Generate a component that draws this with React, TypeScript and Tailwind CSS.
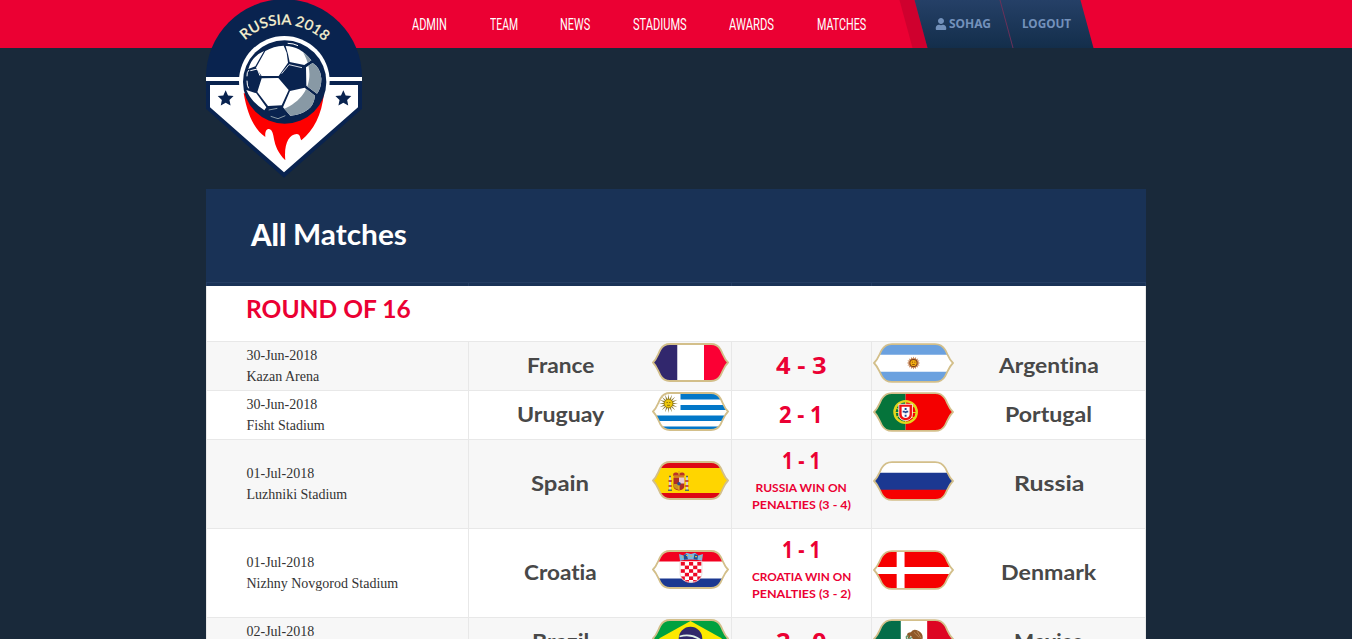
import { useLayoutEffect, useRef, useState, type ReactNode } from 'react';
import { FaUser } from 'react-icons/fa';

/* Text squeezed or stretched horizontally so that it fills its box exactly. */
function Fit({ width, className = '', children }: { width: number; className?: string; children: ReactNode }) {
  const ref = useRef<HTMLSpanElement>(null);
  const [scale, setScale] = useState(1);
  useLayoutEffect(() => {
    if (ref.current) setScale(width / ref.current.offsetWidth);
  }, [width]);
  return (
    <span className={`block whitespace-nowrap ${className}`} style={{ width }}>
      <span ref={ref} className="inline-block origin-left" style={{ transform: `scaleX(${scale})` }}>
        {children}
      </span>
    </span>
  );
}

const star = (cx: number, cy: number, R: number, r = R * 0.48, n = 5) =>
  Array.from({ length: n * 2 }, (_, i) => {
    const a = (Math.PI * i) / n - Math.PI / 2;
    const q = i % 2 ? r : R;
    return `${(cx + q * Math.cos(a)).toFixed(2)},${(cy + q * Math.sin(a)).toFixed(2)}`;
  }).join(' ');

const panels =
  'M208 153 Q232 138 263 137 L272 158 L276 188 L248 228 L197 228 L180 203 Z ' +
  'M157 207 Q168 168 204 153 L178 199 Z ' +
  'M269 138 Q312 138 346 181 L325 195 L281 186 L276 163 Z ' +
  'M197 235 L247 234 L278 270 L257 316 L216 318 L184 276 Z ' +
  'M151 270 L181 280 L211 322 L205 331 Q166 306 151 270 Z ' +
  'M282 273 L326 263 L357 287 Q354 314 337 328 Q315 345 283 347 L261 322 Z ' +
  'M330 202 L350 189 Q374 204 376 235 Q377 262 363 281 L331 257 Z';

function Logo() {
  return (
    <svg className="block h-[185px] w-[156px]" viewBox="30 0 468 555">
      <defs>
        <path id="arc" d="M147 121 A168 168 0 0 1 402 146" />
        <clipPath id="panels"><path d={panels} /></clipPath>
      </defs>
      <path d="M30 232 A234 234 0 0 1 498 232 V326 L264 533 L30 326 Z" fill="#09234f" />
      <path d="M30 231 H498 V243 H30 Z M42 255 H486 V322 L264 517 L42 322 Z" fill="#fff" />
      <circle cx="265" cy="244" r="136" fill="#fff" />
      <path d="M143 280 C154 345 176 389 208 411 C207 398 209 387 219 387 C242 394 221 434 268 481 C263 432 279 403 302 402 C314 403 311 413 316 421 C353 392 377 345 384 280 Z" fill="#fe0000" />
      <circle cx="266" cy="246" r="125" fill="#09234f" />
      <path d={panels} fill="#fff" />
      <path clipPath="url(#panels)" d="M302 130 C361 198 355 289 262 328 L280 360 L340 350 L400 300 L390 130 Z" fill="#8899a5" />
      <g fill="none" stroke="#fff" strokeWidth="3">
        <path d="M153 229 Q152 216 159 210 M163 212 L184 207 L192 227 M153 242 Q153 258 158 265" />
        <path d="M275 130 Q292 130 306 137" />
        <path d="M257 221 L279 194 L318 203" strokeWidth="2.5" />
        <path d="M224 349 L246 356 L268 347 M218 330 L244 325" stroke="#8899a5" />
      </g>
      <polygon points={star(89, 296, 25)} fill="#09234f" />
      <polygon points={star(442, 296, 25)} fill="#09234f" />
      <text fill="#f8f2cf" stroke="#f8f2cf" strokeWidth=".6" fontSize="43" fontFamily="Lato, sans-serif" fontWeight="500">
        <textPath href="#arc" textLength="264" lengthAdjust="spacingAndGlyphs">RUSSIA 2018</textPath>
      </text>
    </svg>
  );
}

const outline =
  'M1 19.5 C5 15.5 6 11 8.5 6.5 C10.5 3 13 1 18 1 H59 C64 1 66.5 3 68.5 6.5 C71 11 72 15.5 76 19.5 C72 23.5 71 28 68.5 32.5 C66.5 36 64 38 59 38 H18 C13 38 10.5 36 8.5 32.5 C6 28 5 23.5 1 19.5 Z';

const art: Record<string, ReactNode> = {
  France: (<><path d="M0 0h25.5v39H0z" fill="#31276d" /><path d="M25.5 0H52v39H25.5z" fill="#fff" /><path d="M52 0h25v39H52z" fill="#fb0034" /></>),
  Argentina: (
    <>
      <path d="M0 0h77v39H0z" fill="#6ba1df" /><path d="M0 11.5h77V28H0z" fill="#fff" />
      <polygon points={star(38.5, 19.5, 6.3, 4.4, 16)} fill="#c98a5c" />
      <circle cx="38.5" cy="19.5" r="3.8" fill="#7d3c12" /><circle cx="38.5" cy="19.5" r="3" fill="#f3ae12" />
      <path d="M37 18.7h1M39.3 18.7h1M37.2 21h2.6" stroke="#6b3410" strokeWidth=".7" />
    </>
  ),
  Uruguay: (
    <>
      <path d="M0 0h77v39H0z" fill="#fff" />
      <path d="M28.5 2H77v5.5H28.5zM28.5 13H77v5H28.5zM0 23.5h77V29H0zM0 34.5h77V39H0z" fill="#0277c8" />
      <polygon points={star(16.5, 11.5, 9.5, 4, 16)} fill="#94813a" />
      <circle cx="16.5" cy="11.5" r="4.3" fill="#eec80a" stroke="#8c7411" strokeWidth=".7" />
      <path d="M14.5 10.5h1.4M17.1 10.5h1.4M15 13.3h3" stroke="#75600a" strokeWidth=".8" />
    </>
  ),
  Portugal: (
    <>
      <path d="M0 0h31v39H0z" fill="#05743b" /><path d="M31 0h46v39H31z" fill="#f40000" />
      <circle cx="31" cy="19.5" r="10.6" fill="none" stroke="#e3d61c" strokeWidth="2.3" />
      <path d="M21 15 L40 26 M40 13 L22 25 M31 9 V30 M20 20 H42" stroke="#e3d61c" strokeWidth="1.1" />
      <path d="M24.5 12h13v9.5c0 8.5-13 8.5-13 0z" fill="#ef1111" stroke="#fff" strokeWidth=".8" />
      <path d="M27.2 14.5h7.6v7c0 5.2-7.6 5.2-7.6 0z" fill="#fff" />
      <path d="M31 15.5v9M28.2 19.2h5.6" stroke="#24438f" strokeWidth="1.8" strokeDasharray="2 1.3" />
    </>
  ),
  Spain: (
    <>
      <path d="M0 0h77v39H0z" fill="#ffd500" /><path d="M0 0h77v7H0zM0 32h77v7H0z" fill="#dd0714" />
      <path d="M18 16v13M35 16v13" stroke="#d8d4c5" strokeWidth="2" />
      <path d="M16.5 20h3.3M33.2 20h3.3M16.5 25h3.3M33.2 25h3.3" stroke="#b5232b" strokeWidth="1.5" />
      <path d="M16 29.3h4M33 29.3h4M17 15.5h2M34 15.5h2" stroke="#5c6a57" strokeWidth="1.4" />
      <path d="M21.5 16.5h10.8v8.8c0 5.5-10.8 5.5-10.8 0z" fill="#ac2d28" />
      <path d="M27 16.5h5.3v6H27z" fill="#e7ccd2" /><path d="M21.5 23h5.4v5.6c-4-.4-5.4-2-5.4-5.6z" fill="#cc951f" />
      <path d="M27 23v6" stroke="#f0c220" /><circle cx="27" cy="22.8" r="1.8" fill="#284c96" />
      <path d="M22 15.7c-3-4.5 3-5.3 4.8-3 2.5-2.3 8-1.1 5 3z" fill="#bb3327" />
      <path d="M22 15h10M27 10v4" stroke="#dba625" strokeWidth="1.2" />
    </>
  ),
  Russia: (<><path d="M0 0h77v12H0z" fill="#fff" /><path d="M0 11.5h77v17H0z" fill="#1b3891" /><path d="M0 28h77v11H0z" fill="#f60000" /></>),
  Croatia: (
    <>
      <path d="M0 0h77v12H0z" fill="#f20020" /><path d="M0 11.5h77V28.5H0z" fill="#fff" /><path d="M0 28.5h77V39H0z" fill="#1b3891" />
      <clipPath id="cro"><path d="M28 11.5h22V23c0 13-22 13-22 0z" /></clipPath>
      <g clipPath="url(#cro)">
        <path d="M28 11h22v24H28z" fill="#fff" />
        {Array.from({ length: 30 }, (_, i) => {
          const c = i % 5, r = Math.floor(i / 5);
          return (c + r) % 2 === 0 ? <rect key={i} x={28.7 + c * 4.15} y={12 + r * 3.6} width="4.15" height="3.6" fill="#ee0825" /> : null;
        })}
      </g>
      <path d="M28 11.5V23c0 12 22 12 22 0V11.5" fill="none" stroke="#e4d5d7" strokeWidth=".8" />
      <path d="M28 10.8 L27 4 L31.5 5.5 L34.5 2.8 L39 4 L43 2.8 L46.5 5.5 L51 4 L50 10.8 Q39 8 28 10.8Z" fill="#7bb7df" />
      <path d="M32 9.8 L31.5 5 L34.5 4 L36 9.3ZM41.5 9.3 L42.5 4 L46 5 L45.5 9.8Z" fill="#204d92" />
      <path d="M30 7h1.5M34 5.5h2M38 6h2.3M43 6.7h2M48 7h1.5" stroke="#dcb84a" strokeWidth="1.2" />
    </>
  ),
  Denmark: (<><path d="M0 0h77v39H0z" fill="#f60000" /><path d="M22.5 0h7.5v39h-7.5zM0 16.5h77v7H0z" fill="#fff" /></>),
  Brazil: (
    <>
      <path d="M0 0h77v39H0z" fill="#00a13f" /><path d="M38.5 2 L70 19.5 L38.5 37 L7 19.5Z" fill="#fce900" />
      <circle cx="38.5" cy="19.5" r="11.8" fill="#30286b" />
      <path d="M27.5 17.5 Q40 14 50 22" fill="none" stroke="#dff0e8" strokeWidth="1.7" />
    </>
  ),
  Mexico: (
    <>
      <path d="M0 0h26.5v39H0z" fill="#046d49" /><path d="M26.5 0H51.5v39H26.5z" fill="#fff" /><path d="M51.5 0H77v39H51.5z" fill="#dd0522" />
      <path d="M34 20 Q30 13 36 13 Q38 9 43 11.5 Q49 15 46.5 21 Q42 25 38 20 L36 16Z" fill="#8f5928" />
      <path d="M34 17 Q30 15 33 22 M37 18 L33 20 M41 22 L45 27" fill="none" stroke="#68976f" strokeWidth="1.4" />
      <path d="M39 13 L44 18 M42 12 L46 19" stroke="#c09160" strokeWidth=".8" />
    </>
  ),
};

function Flag({ team, className }: { team: string; className: string }) {
  return (
    <svg viewBox="0 0 77 39" preserveAspectRatio="none" className={`block shrink-0 ${className}`}>
      <clipPath id={`flag-${team}`}><path d={outline} /></clipPath>
      <g clipPath={`url(#flag-${team})`}>{art[team]}</g>
      <path d={outline} fill="none" stroke="#d3bf8a" strokeWidth="1.8" vectorEffect="non-scaling-stroke" />
    </svg>
  );
}

const nav: [string, number][] = [['ADMIN', 35], ['TEAM', 28], ['NEWS', 30], ['STADIUMS', 54], ['AWARDS', 45], ['MATCHES', 49]];

type Match = {
  date: string; venue: string;
  home: [string, number]; away: [string, number];
  score: [string, number]; note?: [string, number][];
};

const matches: Match[] = [
  { date: '30-Jun-2018', venue: 'Kazan Arena', home: ['France', 67], away: ['Argentina', 100], score: ['4 - 3', 51] },
  { date: '30-Jun-2018', venue: 'Fisht Stadium', home: ['Uruguay', 87], away: ['Portugal', 87], score: ['2 - 1', 44] },
  { date: '01-Jul-2018', venue: 'Luzhniki Stadium', home: ['Spain', 58], away: ['Russia', 70], score: ['1 - 1', 39], note: [['RUSSIA WIN ON', 91], ['PENALTIES (3 - 4)', 99]] },
  { date: '01-Jul-2018', venue: 'Nizhny Novgorod Stadium', home: ['Croatia', 73], away: ['Denmark', 95], score: ['1 - 1', 39], note: [['CROATIA WIN ON', 99], ['PENALTIES (3 - 2)', 99]] },
  { date: '02-Jul-2018', venue: 'Samara Arena', home: ['Brazil', 57], away: ['Mexico', 70], score: ['2 - 0', 51] },
];

function Row({ m, shaded }: { m: Match; shaded: boolean }) {
  const name = "font-['Lato',sans-serif] text-[21px] font-bold leading-[30px] text-[#484848] [font-variant-ligatures:none]";
  return (
    <div className={`flex shrink-0 divide-x divide-[#e8e8e8] border-t border-[#e8e8e8] ${m.note ? 'h-[89px]' : 'h-[49px]'} ${shaded ? 'bg-[#f7f7f7]' : 'bg-white'}`}>
      <div className="flex w-[262px] flex-col justify-center pl-[39.5px] font-['Liberation_Serif',serif] text-[14px] leading-[21px] text-[#333]">
        <p>{m.date}</p>
        <p>{m.venue}</p>
      </div>
      <div className="flex w-[263px] items-center">
        <div className="flex flex-1 justify-center pr-[1px] pb-[2px]"><Fit width={m.home[1]} className={name}>{m.home[0]}</Fit></div>
        <Flag team={m.home[0]} className="mr-[2px] mb-[7px] h-[39px] w-[77px]" />
      </div>
      <div className="flex w-[140px] flex-col items-center justify-center pr-[1px] pb-[2px] font-['Lato',sans-serif] font-bold text-[#eb0033]">
        <Fit width={m.score[1]} className="font-['Open_Sans',sans-serif] text-[23px] leading-[30px]">{m.score[0]}</Fit>
        {m.note && (
          <div className="flex flex-col items-center pt-1 pb-2 text-[12px] leading-[17px]">
            {m.note.map(([text, width]) => <Fit key={text} width={width}>{text}</Fit>)}
          </div>
        )}
      </div>
      <div className="flex w-[273px] items-center">
        <Flag team={m.away[0]} className="ml-[1px] mb-[6px] h-[40px] w-[81px]" />
        <div className="flex flex-1 justify-center pr-[2px] pb-[2px]"><Fit width={m.away[1]} className={name}>{m.away[0]}</Fit></div>
      </div>
    </div>
  );
}

export default function App() {
  return (
    <div className="h-[639px] overflow-hidden bg-[#19293a]">
      <header className="h-12 bg-[#eb0033]">
        <div className="flex h-12 pl-[206px]">
          <div className="relative h-12 w-[156px] shrink-0">
            <div className="absolute top-0 left-0"><Logo /></div>
          </div>
          <nav className="ml-[50px] flex items-center gap-[42.6px] pt-[2px] font-['Roboto',sans-serif] text-[16px] leading-6 text-white">
            {nav.map(([label, width]) => (
              <a key={label} href="#"><Fit width={width}>{label}</Fit></a>
            ))}
          </nav>
          <div className="ml-10 flex h-[48px] skew-x-[15.2deg] font-['Noto_Sans',sans-serif] text-[12px] font-bold leading-none text-[#7391bb]">
            <div className="w-[15px] bg-[#cf002e]" />
            <div className="flex w-[166px] bg-linear-to-b from-[#254067] to-[#132e4b]">
              <a href="#" className="flex w-[86px] items-center justify-center border-r border-[#6b3159] pr-[2px]">
                <span className="flex -skew-x-[15.2deg] items-center gap-[2px]"><FaUser size={12} /><Fit width={42}>SOHAG</Fit></span>
              </a>
              <a href="#" className="flex flex-1 items-center justify-center pr-[2px]">
                <span className="-skew-x-[15.2deg]"><Fit width={49}>LOGOUT</Fit></span>
              </a>
            </div>
          </div>
        </div>
      </header>
      <main className="mx-auto mt-[141px] flex w-[940px] flex-col">
        <div className="flex h-[93px] shrink-0 items-center gap-[6px] bg-[#193256] pb-[3px] pl-[45px] font-['Lato',sans-serif] text-white">
          <Fit width={36} className="text-[31px] font-black leading-9">All</Fit>
          <Fit width={114} className="text-[28px] font-bold leading-9">Matches</Fit>
        </div>
        <div className="flex h-1 shrink-0 divide-x divide-[#243d62] border-x border-t border-[#243d62] bg-[#193256]">
          <div className="w-[262px]" /><div className="w-[263px]" /><div className="w-[140px]" /><div className="w-[273px]" />
        </div>
        <div className="border-x border-[#e8e8e8] bg-white">
          <div className="h-[55px] pt-[6px] pl-[39px]">
            <Fit width={165} className="font-['Lato',sans-serif] text-[25px] font-bold leading-[32px] text-[#eb0033]">ROUND OF 16</Fit>
          </div>
          {matches.map((m, i) => <Row key={i} m={m} shaded={i % 2 === 0} />)}
        </div>
      </main>
    </div>
  );
}
